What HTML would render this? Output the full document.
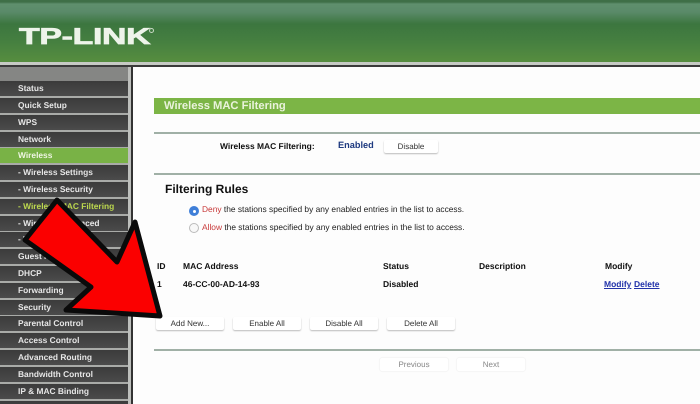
<!DOCTYPE html>
<html>
<head>
<meta charset="utf-8">
<style>
html,body{margin:0;padding:0;background:#fdfdfd;width:700px;height:404px;overflow:hidden}
body{position:relative;font-family:"Liberation Sans",sans-serif;text-rendering:geometricPrecision}
#wrap{position:absolute;left:0;top:0;width:700px;height:404px;overflow:hidden;filter:blur(.35px)}
.abs{position:absolute;white-space:nowrap}
#hdr{position:absolute;left:0;top:0;width:700px;height:62px;background:linear-gradient(#3f6f47 0,#3f6f47 2px,#5f8f6d 4px,#5a8a69 12px,#3c763f 24px,#468040 42px,#558c3f 60px)}
#hdrb{position:absolute;left:0;top:62px;width:700px;height:3px;background:#c6cac4}
#hdrl{position:absolute;left:0;top:65px;width:700px;height:2px;background:#3a3a3a}
#logo{position:absolute;left:19px;top:22px;color:#eef4ea;font-weight:bold;font-size:23px;line-height:28px;transform-origin:0 0;transform:scaleX(1.47);letter-spacing:-.2px;white-space:nowrap;-webkit-text-stroke:.7px #eef4ea}
#reg{position:absolute;left:149px;top:28px;width:5px;height:5px;border-radius:50%;border:1px solid #c8d8c4;box-sizing:border-box}
#side{position:absolute;left:0;top:67px;width:128px;height:337px;background:#a9aba8}
#sidet{position:absolute;left:0;top:0;width:128px;height:14px;background:#858684}
#rgt{position:absolute;left:128px;top:67px;width:3px;height:337px;background:#bdbfbc}
#rgd{position:absolute;left:131px;top:67px;width:1.5px;height:337px;background:#333}
.m{position:absolute;left:0;width:128px;height:15px;background:linear-gradient(#3b3b3b,#4b4b4b);color:#e6e6e6;font-size:8.4px;font-weight:bold;line-height:15px;padding-left:18px;box-sizing:border-box;white-space:nowrap}
.m.a{background:#79b246;color:#eef5e2}
.m.y{color:#bcd84e}
.t{position:absolute;white-space:nowrap;font-size:8.5px;color:#222;line-height:11px}
.b{font-weight:bold;color:#111}
.ln{position:absolute;left:154px;width:546px;height:2px;background:#a0b0a6}
.btn{position:absolute;height:13px;background:#fff;border-radius:2px;box-shadow:0 1px 1.5px #bbb;font-size:8px;line-height:13px;text-align:center;color:#333}
.dim{box-shadow:0 0 1.5px #ddd;color:#888}
</style>
</head>
<body>
<div id="wrap">
<div id="hdr"></div>
<div id="logo">TP-LINK</div>
<div id="reg"></div>
<div id="hdrb"></div>
<div id="hdrl"></div>

<div id="side"><div id="sidet"></div></div>
<div id="rgt"></div>
<div id="rgd"></div>

<div class="m" style="top:81px">Status</div>
<div class="m" style="top:98px">Quick Setup</div>
<div class="m" style="top:115px">WPS</div>
<div class="m" style="top:132px">Network</div>
<div class="m a" style="top:148px">Wireless</div>
<div class="m" style="top:165px">- Wireless Settings</div>
<div class="m" style="top:182px">- Wireless Security</div>
<div class="m y" style="top:199px">- Wireless MAC Filtering</div>
<div class="m" style="top:216px">- Wireless Advanced</div>
<div class="m" style="top:232px">- Wireless Statistics</div>
<div class="m" style="top:249px">Guest Network</div>
<div class="m" style="top:266px">DHCP</div>
<div class="m" style="top:283px">Forwarding</div>
<div class="m" style="top:300px">Security</div>
<div class="m" style="top:316px">Parental Control</div>
<div class="m" style="top:333px">Access Control</div>
<div class="m" style="top:350px">Advanced Routing</div>
<div class="m" style="top:367px">Bandwidth Control</div>
<div class="m" style="top:384px">IP &amp; MAC Binding</div>
<div class="m" style="top:401px"></div>

<div class="abs" style="left:154px;top:98px;width:546px;height:16px;background:#7cb546;color:#eaf3dc;font-size:11.2px;font-weight:bold;line-height:16px;padding-left:10px;box-sizing:border-box">Wireless MAC Filtering</div>
<div class="ln" style="top:132px"></div>
<div class="t b" style="left:220px;top:141px;font-size:8.45px">Wireless MAC Filtering:</div>
<div class="t" style="left:338px;top:140px;font-size:9.2px;font-weight:bold;color:#1e3a80">Enabled</div>
<div class="btn" style="left:384px;top:140px;width:54px">Disable</div>
<div class="ln" style="top:173px"></div>

<div class="t b" style="left:165px;top:182px;font-size:12px;line-height:14px">Filtering Rules</div>
<div class="abs" style="left:189px;top:206px;width:10px;height:10px;border-radius:50%;background:#3f7fd8"><div class="abs" style="left:3.5px;top:3.5px;width:3px;height:3px;border-radius:50%;background:#fff"></div></div>
<div class="abs" style="left:189px;top:223px;width:10px;height:10px;border-radius:50%;background:#f8f8f8;border:1px solid #bbb;box-sizing:border-box"></div>
<div class="t" style="left:202px;top:204px;font-size:8.4px"><span style="color:#c83a3a">Deny</span> the stations specified by any enabled entries in the list to access.</div>
<div class="t" style="left:202px;top:222px;font-size:8.4px"><span style="color:#c83a3a">Allow</span> the stations specified by any enabled entries in the list to access.</div>

<div class="t b" style="left:157px;top:261px">ID</div>
<div class="t b" style="left:183px;top:261px">MAC Address</div>
<div class="t b" style="left:383px;top:261px">Status</div>
<div class="t b" style="left:479px;top:261px">Description</div>
<div class="t b" style="left:605px;top:261px">Modify</div>
<div class="t b" style="left:157px;top:279px">1</div>
<div class="t b" style="left:183px;top:279px">46-CC-00-AD-14-93</div>
<div class="t b" style="left:383px;top:279px">Disabled</div>
<div class="t b" style="left:604px;top:279px;color:#2233aa;text-decoration:underline">Modify</div>
<div class="t b" style="left:634px;top:279px;color:#2233aa;text-decoration:underline">Delete</div>

<div class="btn" style="left:156px;top:317px;width:68px">Add New...</div>
<div class="btn" style="left:233px;top:317px;width:68px">Enable All</div>
<div class="btn" style="left:310px;top:317px;width:68px">Disable All</div>
<div class="btn" style="left:387px;top:317px;width:68px">Delete All</div>
<div class="ln" style="top:349px"></div>
<div class="btn dim" style="left:380px;top:358px;width:68px">Previous</div>
<div class="btn dim" style="left:457px;top:358px;width:68px">Next</div>

<svg class="abs" style="left:0;top:0" width="700" height="404" viewBox="0 0 700 404">
<polygon points="57,200 25,240 91,287 66,310 160,316 135,222 117,262" fill="#fb0000" stroke="#0a0a0a" stroke-width="5" stroke-linejoin="round"/>
</svg>
</div>
</body>
</html>
